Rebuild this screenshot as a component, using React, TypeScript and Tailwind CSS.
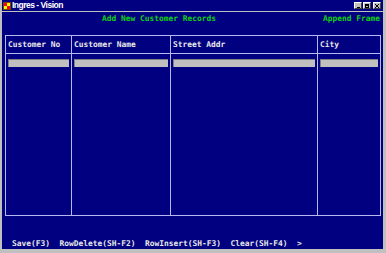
import React from "react";

const mono = { fontFamily: '"DejaVu Sans Mono", "Liberation Mono", monospace' };

export default function App() {
  const cols = [
    { w: "w-[66px]", label: "Customer No" },
    { w: "w-[99px]", label: "Customer Name" },
    { w: "w-[147px]", label: "Street Addr" },
    { w: "flex-1", label: "City" },
  ];
  return (
    <div className="w-[386px] h-[253px] bg-[#c0c0c0] flex flex-col pl-[2px] pr-[3px] pb-[4px] overflow-hidden">
      {/* title bar */}
      <div className="h-[11px] bg-[#000080] flex items-center shrink-0">
        <svg width="8" height="8" viewBox="0 0 8 8" className="ml-[1px] mr-[1px]">
          <rect x="0" y="0" width="8" height="8" fill="#804000" />
          <rect x="1" y="1" width="3" height="3" fill="#ff0000" />
          <rect x="4" y="1" width="3" height="3" fill="#ffff00" />
          <rect x="1" y="4" width="3" height="3" fill="#ffff00" />
          <rect x="4" y="4" width="3" height="3" fill="#ff0000" />
        </svg>
        <span
          className="text-white font-bold text-[8.5px] tracking-[-0.5px] leading-none"
          style={{ fontFamily: '"Liberation Sans", Arial, sans-serif' }}
        >
          Ingres - Vision
        </span>
        <div className="ml-auto flex items-center gap-[1px] mr-[2px]">
          {["min", "max", "close"].map((k, i) => (
            <div
              key={k}
              className={`w-[8px] h-[7px] bg-[#c0c0c0] border-t border-l border-white border-b border-r border-b-[#404040] border-r-[#404040] flex items-center justify-center ${i === 2 ? "ml-[1px]" : ""}`}
            >
              {k === "min" && <div className="w-[3px] h-[1px] bg-black mt-[3px]" />}
              {k === "max" && <div className="w-[4px] h-[4px] border border-black border-t-2" />}
              {k === "close" && (
                <svg width="4" height="4" viewBox="0 0 4 4">
                  <path d="M0 0L4 4M4 0L0 4" stroke="black" strokeWidth="1" />
                </svg>
              )}
            </div>
          ))}
        </div>
      </div>
      <div className="h-[1px] bg-[#c0c0c0] shrink-0" />
      {/* content */}
      <div className="flex-1 bg-[#000080] flex flex-col font-bold text-[7.9px] leading-none" style={mono}>
        <div className="h-[11px] flex items-end text-[#10d010] whitespace-nowrap">
          <span className="ml-[100px]">Add New Customer Records</span>
          <span className="ml-[107px]">Append Frame</span>
        </div>
        <div className="mt-[12px] ml-[3px] mr-[2px] h-[181px] border border-[#b8b8f0] flex">
          {cols.map((c, i) => (
            <div
              key={c.label}
              className={`${c.w} flex flex-col ${i < 3 ? "border-r border-[#b8b8f0]" : ""}`}
            >
              <div className="h-[18px] border-b border-[#b8b8f0] flex items-center pl-[2px] pt-[1px] text-[#e8e8e8] whitespace-nowrap">
                {c.label}
              </div>
              <div className="mt-[5px] mx-[2px] h-[8px] bg-[#c0c0c0] border-t border-l border-[#808080]" />
            </div>
          ))}
        </div>
        <div className="flex-1 flex items-end pb-[1px] pl-[10px] text-[#e8e8e8] whitespace-pre">
          {"Save(F3)  RowDelete(SH-F2)  RowInsert(SH-F3)  Clear(SH-F4)  >"}
        </div>
      </div>
    </div>
  );
}
